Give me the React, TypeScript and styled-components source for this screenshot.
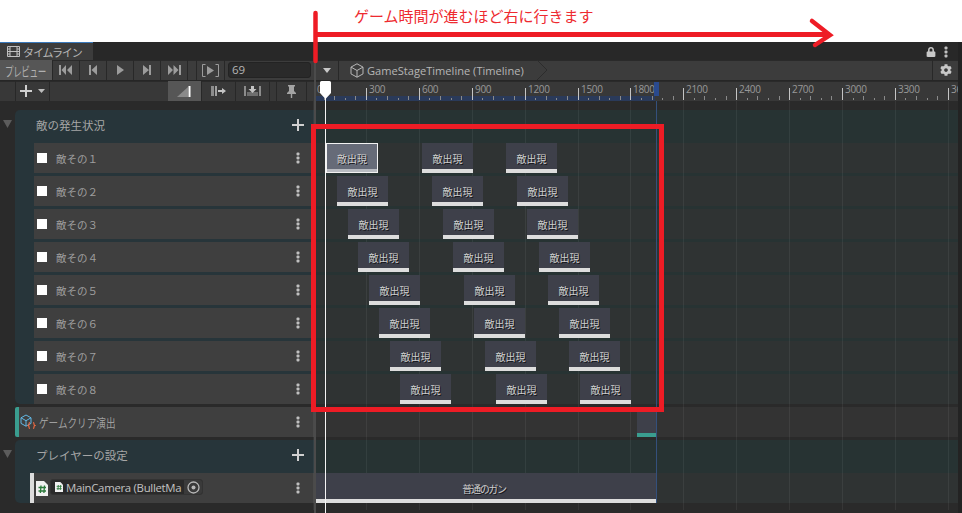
import React from "react";
import styled, { createGlobalStyle } from "styled-components";
import { FaCog, FaLock } from "react-icons/fa";

const GlobalStyle = createGlobalStyle`
  html, body { margin: 0; padding: 0; background: #fff; overflow: hidden; }
  * { box-sizing: border-box; }
`;

const JP = `"Noto Sans CJK JP", "Noto Sans", sans-serif`;
const LATIN = `"Open Sans", "Noto Sans CJK JP", sans-serif`;

const Stage = styled.div`
  position: relative;
  width: 962px;
  height: 513px;
  overflow: hidden;
  background: #fff;
  font-family: ${JP};
`;

const NoteBand = styled.div`
  height: 42px;
  padding: 5px 0 0 354px;
  color: #ee2a30;
  font-size: 15px;
  line-height: 22px;
  white-space: nowrap;
`;

const Editor = styled.div`
  height: 471px;
  background: #232323;
  padding-right: 4px;
`;

const Inner = styled.div`
  width: 958px;
  height: 471px;
  background: #2a2a2a;
  display: flex;
  flex-direction: column;
`;

const TabBar = styled.div`
  height: 18px;
  background: #282828;
  display: flex;
  align-items: stretch;
  justify-content: space-between;
  padding-right: 10px;
`;

const Tab = styled.div`
  width: 93px;
  background: #3c3c3c;
  border-top: 1px solid #3a79bb;
  display: flex;
  align-items: center;
  gap: 3px;
  padding-left: 7px;
  color: #b4b4b4;
  font-size: 11px;
  letter-spacing: -1.1px;
`;

const TabActions = styled.div`
  display: flex;
  align-items: center;
  gap: 8px;
  color: #c8c8c8;
  padding-top: 1px;
`;

const ToolRow = styled.div<{ $bg: string; $h: number; $line?: boolean }>`
  height: ${(p) => p.$h}px;
  display: flex;
  background: ${(p) => p.$bg};
  border-bottom: ${(p) => (p.$line ? "1px solid #262626" : "none")};
  box-shadow: inset 0 1px 0 #2a2a2a;
`;

const ToolSection = styled.div<{ $end?: boolean }>`
  width: 316px;
  flex: none;
  display: flex;
  align-items: stretch;
  padding-right: ${(p) => (p.$end ? "9px" : "0")};
`;

const ToolButton = styled.div<{ $w: number; $active?: boolean; $left?: boolean }>`
  width: ${(p) => p.$w}px;
  flex: none;
  display: flex;
  align-items: center;
  justify-content: center;
  background: ${(p) => (p.$active ? "#565656" : "transparent")};
  border-right: 1px solid #282828;
  border-left: ${(p) => (p.$left ? "1px solid #282828" : "none")};
  color: #a6a6a6;
`;

const Squeezed = styled.span<{ $scale: number }>`
  display: inline-block;
  transform: scaleX(${(p) => p.$scale});
  transform-origin: left center;
  white-space: nowrap;
`;

const PreviewLabel = styled.div`
  width: 100%;
  padding-left: 5px;
  font-size: 13px;
  letter-spacing: -0.6px;
  color: #b0b0b0;
  overflow: hidden;
`;

const Spacer = styled.div<{ $w?: number }>`
  flex: ${(p) => (p.$w ? `none` : `1`)};
  width: ${(p) => (p.$w ? `${p.$w}px` : "auto")};
`;

const FrameInput = styled.div`
  width: 83px;
  height: 16px;
  margin: 2px 0 0 3px;
  background: #2a2a2a;
  border: 1px solid #232323;
  border-radius: 3px;
  color: #b4b4b4;
  font: 11.5px/14px ${LATIN};
  padding-left: 3px;
`;

const Crumb = styled.div`
  flex: 1;
  display: flex;
  align-items: center;
  gap: 3px;
  padding-left: 11px;
  color: #b6b6b6;
  font: 11.1px ${LATIN};
  white-space: nowrap;
`;

const ChevronSlot = styled.svg`
  margin-left: 9px;
  flex: none;
`;

const GearButton = styled.div`
  width: 26px;
  flex: none;
  display: flex;
  align-items: center;
  justify-content: center;
  border-left: 1px solid #282828;
  color: #c8c8c8;
`;

const RulerSvg = styled.svg`
  display: block;
  flex: none;
`;

const Body = styled.div`
  position: relative;
  flex: 1;
  display: flex;
  padding-top: 9px;
`;

const LeftPanel = styled.div`
  width: 316px;
  flex: none;
  display: flex;
  flex-direction: column;
  gap: 3px;
`;

const Group = styled.div`
  position: relative;
  width: 299px;
  margin-left: 15px;
  background: #27353a;
  border-radius: 5px 0 0 5px;
`;

const Collapse = styled.svg`
  position: absolute;
  left: -12px;
  top: 10px;
`;

const GroupHead = styled.div`
  height: 33px;
  display: flex;
  align-items: center;
  justify-content: space-between;
  padding: 0 10px 3px 21px;
  color: #a6a6a6;
  font-size: 11.5px;
`;

const TrackList = styled.div`
  display: flex;
  flex-direction: column;
  gap: 3px;
`;

const Track = styled.div<{ $inset: number; $bar?: string }>`
  height: 30px;
  margin-left: ${(p) => p.$inset}px;
  background: #3f3f3f;
  border-left: ${(p) => (p.$bar ? `4px solid ${p.$bar}` : "none")};
  border-radius: ${(p) => (p.$inset === 0 ? "2px 0 0 2px" : "0")};
  display: flex;
  align-items: center;
  color: #9e9e9e;
  padding-right: 14px;
`;

const Check = styled.span`
  width: 10px;
  height: 10px;
  margin-left: 3px;
  background: #fff;
  flex: none;
`;

const TrackName = styled.span<{ $gap: number; $size: number }>`
  flex: 1;
  margin-left: ${(p) => p.$gap}px;
  font-size: ${(p) => p.$size}px;
  white-space: nowrap;
`;

const Binding = styled.div`
  width: 153px;
  height: 16px;
  margin-left: 2px;
  margin-top: -2px;
  background: #2a2a2a;
  border: 1px solid #333;
  border-radius: 3px;
  display: flex;
  align-items: center;
  padding-left: 4px;
  gap: 3px;
  color: #c2c2c2;
  font: 11.4px ${LATIN};
  letter-spacing: -0.3px;
  overflow: hidden;
  white-space: nowrap;
`;

const BindingText = styled.span`
  width: 118px;
  flex: none;
  overflow: hidden;
`;

const BindingTarget = styled.span`
  flex: 1;
  align-self: stretch;
  margin-left: -3px;
  background: #3a3a3a;
  display: flex;
  align-items: center;
  justify-content: center;
`;

const KebabWrap = styled.svg`
  flex: none;
`;

const RightPanel = styled.div`
  flex: 1;
  display: flex;
  flex-direction: column;
  gap: 3px;
  position: relative;
`;

const LaneGroup = styled.div`
  background: #273333;
  padding-top: 33px;
  display: flex;
  flex-direction: column;
  gap: 3px;
`;

const Lane = styled.div<{ $bg: string }>`
  position: relative;
  height: 30px;
  background: ${(p) => p.$bg};
`;

const Clip = styled.div<{ $x: number; $w: number; $selected?: boolean; $bar?: string; $wideLabel?: boolean }>`
  position: absolute;
  z-index: 2;
  top: 0;
  left: ${(p) => p.$x - 316}px;
  width: ${(p) => p.$w}px;
  height: 30px;
  padding: 5px ${(p) => (p.$wideLabel ? "4px" : "0")} 0 0;
  background: ${(p) => (p.$selected ? "#666b78" : "#3e404a")};
  border-bottom: 4px solid ${(p) => (p.$bar ? p.$bar : p.$selected ? "#b9bcc2" : "#dddddd")};
  outline: ${(p) => (p.$selected ? "1px solid #f2f2f2" : "none")};
  outline-offset: -1px;
  display: flex;
  align-items: center;
  justify-content: center;
  color: #cfcfcf;
  font-size: 10px;
  letter-spacing: ${(p) => (p.$wideLabel ? "-1.3px" : "0")};
  text-shadow: 1px 1px 0 #15161a;
  white-space: nowrap;
  overflow: hidden;
`;

const GridLine = styled.div<{ $x: number }>`
  position: absolute;
  z-index: 1;
  top: -9px;
  bottom: 3px;
  left: ${(p) => p.$x - 316}px;
  width: 1px;
  background: rgba(255, 255, 255, 0.06);
`;

const EndLine = styled.div`
  position: absolute;
  z-index: 3;
  top: -9px;
  bottom: 10px;
  left: 340px;
  width: 1px;
  background: #34507c;
`;

const Divider = styled.div`
  position: absolute;
  z-index: 5;
  left: 314px;
  top: 60px;
  bottom: 0;
  width: 2px;
  background: #4b4b4b;
`;

const PlayLine = styled.div`
  position: absolute;
  z-index: 6;
  left: 325px;
  top: 95px;
  bottom: 0;
  width: 1px;
  background: #f4f4f4;
`;

const PlayHead = styled.svg`
  position: absolute;
  z-index: 6;
  left: 320px;
  top: 81px;
`;

const RedBox = styled.div`
  position: absolute;
  z-index: 7;
  left: 311px;
  top: 124px;
  width: 353px;
  height: 288px;
  border: 5px solid #ee1c25;
`;

const ArrowSvg = styled.svg`
  position: absolute;
  z-index: 8;
  left: 300px;
  top: 0;
`;

const Kebab = () => (
  <KebabWrap width="4" height="12" viewBox="0 0 4 12">
    <rect x="0.5" y="0.5" width="3" height="3" rx="1" fill="#c0c0c0" />
    <rect x="0.5" y="4.5" width="3" height="3" rx="1" fill="#c0c0c0" />
    <rect x="0.5" y="8.5" width="3" height="3" rx="1" fill="#c0c0c0" />
  </KebabWrap>
);

const Plus = ({ size = 12, color = "#d0d0d0" }: { size?: number; color?: string }) => (
  <svg width={size} height={size} viewBox="0 0 12 12">
    <path d="M0 6h12M6 0v12" stroke={color} strokeWidth="2" />
  </svg>
);

const Caret = ({ color = "#c8c8c8" }: { color?: string }) => (
  <svg width="8" height="5" viewBox="0 0 8 5">
    <path d="M0 0h8L4 5z" fill={color} />
  </svg>
);

const Transport = ({ d }: { d: string }) => (
  <svg width="14" height="10" viewBox="0 0 14 10">
    <path d={d} fill="#9c9c9c" />
  </svg>
);

const Film = () => (
  <svg width="13" height="11" viewBox="0 0 13 11">
    <path
      d="M.5.5h12v10H.5zM3 .5v10M10 .5v10M.5 3h2.5M.5 5.5h2.5M.5 8h2.5M10 3h2.5M10 5.5h2.5M10 8h2.5M3 5.5h7"
      fill="none"
      stroke="#c0c0c0"
    />
  </svg>
);

const BracketPlay = () => (
  <svg width="17" height="13" viewBox="0 0 17 13">
    <path d="M3.5.5H.5v12h3M13.5.5h3v12h-3" fill="none" stroke="#9c9c9c" />
    <path d="M5 2l7 4.5L5 11z" fill="#9c9c9c" />
  </svg>
);

const RippleIcon = () => (
  <svg width="15" height="11" viewBox="0 0 15 11">
    <path d="M0 11L11 1v10z" fill="#8a8a8a" />
    <rect x="11.5" y="0" width="2" height="11" fill="#fff" />
  </svg>
);

const ReplaceIcon = () => (
  <svg width="15" height="11" viewBox="0 0 15 11">
    <rect x="0" y="0" width="3" height="10" fill="#8c8c8c" />
    <rect x="4" y="0" width="2" height="10" fill="#a0a0a0" />
    <path d="M7 4h4V2l4 3-4 3V6H7z" fill="#c4c4c4" />
  </svg>
);

const MixIcon = () => (
  <svg width="17" height="11" viewBox="0 0 17 11">
    <rect x="0" y="0" width="2" height="10" fill="#8c8c8c" />
    <rect x="15" y="0" width="2" height="10" fill="#8c8c8c" />
    <path d="M3 6h11v4H3z" fill="#6e6e6e" />
    <path d="M7 0h3v3h2.500L8.500 7 4.500 3H7z" fill="#c4c4c4" />
  </svg>
);

const PinIcon = () => (
  <svg width="11" height="13" viewBox="0 0 11 13">
    <path d="M2 0h7v1.500H8V6l2 2v1H6.200v4H4.800V9H1V8l2-2V1.500H2z" fill="#a4a4a4" />
  </svg>
);

const CubeOutline = () => (
  <svg width="14" height="15" viewBox="0 0 14 15">
    <path
      d="M7 .8l6 3.300v6.800l-6 3.300-6-3.300V4.100zM1 4.100l6 3.400 6-3.400M7 7.500v6.700"
      fill="none"
      stroke="#b8b8b8"
    />
  </svg>
);

const ScriptCube = () => (
  <svg width="16" height="17" viewBox="0 0 16 17">
    <path d="M6 1l5 2.800v5.600l-5 2.800-5-2.800V3.800zM1 3.800l5 2.900 5-2.900M6 6.700v5.400" fill="none" stroke="#62b9e6" />
    <path
      d="M10 8.500c-1 0-1 .5-1 1.500s0 1.200-.8 1.500c.8.300.8.500.8 1.500s0 1.500 1 1.500M13 8.500c1 0 1 .5 1 1.500s0 1.200.8 1.500c-.8.300-.8.500-.8 1.500s0 1.500-1 1.500"
      fill="none"
      stroke="#f06a42"
      strokeWidth="1.200"
    />
  </svg>
);

const ScriptFile = ({ size }: { size: number }) => (
  <svg width={size} height={size * 1.25} viewBox="0 0 12 15">
    <path d="M0 0h8l4 4v11H0z" fill="#f0f0f0" />
    <path d="M5 4.500L4.400 12M8.500 4.500L7.900 12M2.500 6.500h7.500M2.500 10h7.500" stroke="#2c7a3c" strokeWidth="1.300" fill="none" />
  </svg>
);

const Target = () => (
  <svg width="13" height="13" viewBox="0 0 13 13">
    <circle cx="6.500" cy="6.500" r="5.500" fill="none" stroke="#b8b8b8" strokeWidth="1.300" />
    <circle cx="6.500" cy="6.500" r="2" fill="#b8b8b8" />
  </svg>
);

const TriDown = () => (
  <Collapse width="9" height="8" viewBox="0 0 9 8">
    <path d="M0 0h9L4.500 8z" fill="#5c5c5c" />
  </Collapse>
);

const tickX = (n: number) => Math.round(313 + 52.9 * n);
const TICKS = Array.from({ length: 13 }, (_, i) => i);

const Ruler = () => {
  const minors: React.ReactNode[] = [];
  TICKS.forEach((n) => {
    for (let k = 1; k < 5; k++) {
      const x = Math.round(313 + 52.9 * n + 10.58 * k) - 316;
      if (x < 0) continue;
      minors.push(
        <rect key={`${n}-${k}`} x={x} y={k % 2 ? 17 : 15} width="1" height={k % 2 ? 2 : 4} fill="#8a8a8a" />
      );
    }
  });
  return (
    <RulerSvg width="642" height="20" viewBox="0 0 642 20">
      <rect x="0" y="15" width="339" height="5" fill="#2a3a5a" />
      {minors}
      {TICKS.map((n) => {
        const x = tickX(n) - 316;
        return (
          <g key={n}>
            {n > 0 && <rect x={x} y="7" width="1" height="12" fill="#c4c4c4" />}
            <text
              x={n === 0 ? 1 : x + 3}
              y="12"
              fill="#989898"
              fontFamily="'Open Sans', sans-serif"
              fontSize="10"
              letterSpacing="-0.3"
            >
              {n * 300}
            </text>
          </g>
        );
      })}
      <rect x="338" y="1" width="5" height="14" fill="#2a4a8e" />
    </RulerSvg>
  );
};

const ROWS: [string, number[]][] = [
  ["敵その１", [326, 422, 506]],
  ["敵その２", [337, 432, 517]],
  ["敵その３", [348, 443, 527]],
  ["敵その４", [358, 453, 539]],
  ["敵その５", [369, 464, 548]],
  ["敵その６", [379, 474, 559]],
  ["敵その７", [390, 485, 569]],
  ["敵その８", [400, 496, 580]],
];

export default function App() {
  return (
    <Stage>
      <GlobalStyle />
      <NoteBand>ゲーム時間が進むほど右に行きます</NoteBand>
      <Editor>
        <Inner>
          <TabBar>
            <Tab>
              <Film />
              タイムライン
            </Tab>
            <TabActions>
              <FaLock size={10} />
              <Kebab />
            </TabActions>
          </TabBar>
          <ToolRow $bg="#3c3c3c" $h={21} $line>
            <ToolSection>
              <ToolButton $w={53} $active>
                <PreviewLabel>
                  <Squeezed $scale={0.66}>プレビュー</Squeezed>
                </PreviewLabel>
              </ToolButton>
              <ToolButton $w={27}>
                <Transport d="M0 0h2v10H0zM7 0v10L2.500 5zM13 0v10L8 5z" />
              </ToolButton>
              <ToolButton $w={27}>
                <Transport d="M3 0h2v10H3zM11 0v10L5.500 5z" />
              </ToolButton>
              <ToolButton $w={27}>
                <Transport d="M4 0v10l7-5z" />
              </ToolButton>
              <ToolButton $w={27}>
                <Transport d="M3 0v10l6-5zM9 0h2v10H9z" />
              </ToolButton>
              <ToolButton $w={27}>
                <Transport d="M1 0v10l5-5zM6.500 0v10l5-5zM12 0h2v10h-2z" />
              </ToolButton>
              <ToolButton $w={9} />
              <ToolButton $w={28}>
                <BracketPlay />
              </ToolButton>
              <FrameInput>69</FrameInput>
            </ToolSection>
            <ToolButton $w={23}>
              <Caret />
            </ToolButton>
            <Crumb>
              <CubeOutline />
              GameStageTimeline (Timeline)
              <ChevronSlot width="12" height="20" viewBox="0 0 12 20">
                <path d="M1 0l10 10L1 20" fill="none" stroke="#2c2c2c" />
              </ChevronSlot>
            </Crumb>
            <GearButton>
              <FaCog size={12} />
            </GearButton>
          </ToolRow>
          <ToolRow $bg="#383838" $h={20}>
            <ToolSection $end>
              <Spacer $w={15} />
              <ToolButton $w={35} $left>
                <svg width="26" height="12" viewBox="0 0 26 12">
                  <path d="M0 6h12M6 0v12" stroke="#d0d0d0" strokeWidth="2" />
                  <path d="M18 4h7l-3.500 4z" fill="#bdbdbd" />
                </svg>
              </ToolButton>
              <Spacer />
              <ToolButton $w={34} $active>
                <RippleIcon />
              </ToolButton>
              <ToolButton $w={34}>
                <ReplaceIcon />
              </ToolButton>
              <ToolButton $w={34}>
                <MixIcon />
              </ToolButton>
              <ToolButton $w={7} />
              <ToolButton $w={30}>
                <PinIcon />
              </ToolButton>
            </ToolSection>
            <Ruler />
          </ToolRow>
          <Body>
            <LeftPanel>
              <Group>
                <TriDown />
                <GroupHead>
                  敵の発生状況
                  <Plus />
                </GroupHead>
                <TrackList>
                  {ROWS.map(([name]) => (
                    <Track key={name} $inset={19}>
                      <Check />
                      <TrackName $gap={9} $size={10.5}>{name}</TrackName>
                      <Kebab />
                    </Track>
                  ))}
                </TrackList>
              </Group>
              <Group>
                <Track $inset={0} $bar="#3a9d8f">
                  <Spacer $w={1} />
                  <ScriptCube />
                  <TrackName $gap={3} $size={12}>
                    <Squeezed $scale={0.8}>ゲームクリア演出</Squeezed>
                  </TrackName>
                  <Kebab />
                </Track>
              </Group>
              <Group>
                <TriDown />
                <GroupHead>
                  プレイヤーの設定
                  <Plus />
                </GroupHead>
                <Track $inset={15} $bar="#dcdcdc">
                  <Spacer $w={2} />
                  <ScriptFile size={12} />
                  <Binding>
                    <ScriptFile size={8} />
                    <BindingText>MainCamera (BulletMa</BindingText>
                    <BindingTarget>
                      <Target />
                    </BindingTarget>
                  </Binding>
                  <Spacer />
                  <Kebab />
                </Track>
              </Group>
            </LeftPanel>
            <RightPanel>
              {TICKS.map((n) => (
                <GridLine key={n} $x={tickX(n)} />
              ))}
              <EndLine />
              <LaneGroup>
                {ROWS.map(([name, xs]) => (
                  <Lane key={name} $bg="#2f3333">
                    {xs.map((x) => (
                      <Clip key={x} $x={x} $w={x === 326 ? 52 : 51} $selected={x === 326}>
                        敵出現
                      </Clip>
                    ))}
                  </Lane>
                ))}
              </LaneGroup>
              <Lane $bg="#333333">
                <Clip $x={637} $w={19} $bar="#3a9d8f" />
              </Lane>
              <LaneGroup>
                <Lane $bg="#2f3333">
                  <Clip $x={316} $w={340} $wideLabel>普通のガン</Clip>
                </Lane>
              </LaneGroup>
            </RightPanel>
          </Body>
        </Inner>
      </Editor>

      <Divider />
      <PlayLine />
      <PlayHead width="11" height="18" viewBox="0 0 11 18">
        <path d="M1.500 0h8A1.500 1.500 0 0 1 11 1.500V12l-5.500 6L0 12V1.500A1.500 1.500 0 0 1 1.500 0z" fill="#fff" />
      </PlayHead>
      <RedBox />
      <ArrowSvg width="540" height="64" viewBox="0 0 540 64">
        <path d="M15.500 13v48" stroke="#ee1c25" strokeWidth="4.500" strokeLinecap="round" fill="none" />
        <path d="M16 34.500h514" stroke="#ee1c25" strokeWidth="5" fill="none" />
        <path d="M512 21l18 14-15 10" stroke="#ee1c25" strokeWidth="4.500" strokeLinecap="round" fill="none" />
      </ArrowSvg>
    </Stage>
  );
}
